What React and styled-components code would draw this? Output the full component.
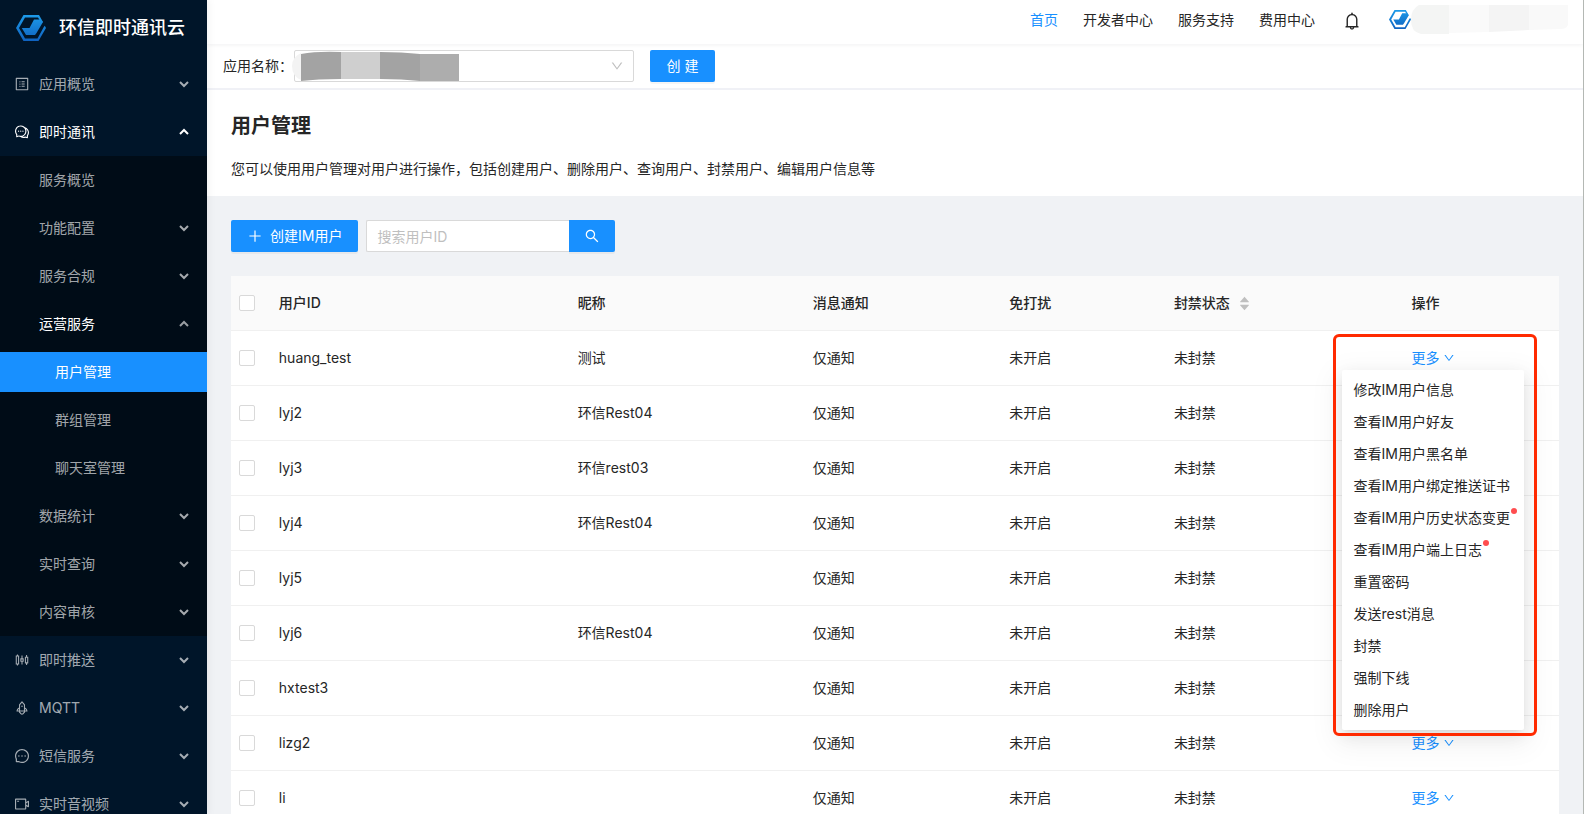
import { useState } from 'react'
import styled, { createGlobalStyle } from 'styled-components'
import {
  AiFillCaretDown,
  AiFillCaretUp,
  AiOutlineBell,
  AiOutlineComment,
  AiOutlineDown,
  AiOutlineMessage,
  AiOutlinePlus,
  AiOutlineProfile,
  AiOutlineRocket,
  AiOutlineSearch,
  AiOutlineSliders,
  AiOutlineVideoCamera,
} from 'react-icons/ai'

const GlobalStyle = createGlobalStyle`
  * {
    box-sizing: border-box;
  }
  body {
    margin: 0;
    font-family: Inter, "Noto Sans CJK SC", sans-serif;
    font-size: 14px;
    line-height: 22px;
    color: #262626;
    background: #f0f2f5;
  }
  button, input, select {
    font: inherit;
    color: inherit;
  }
  a {
    color: inherit;
    text-decoration: none;
  }
`

const Page = styled.div`
  display: flex;
  height: 100vh;
  overflow: hidden;
  border-right: 1px solid #b4b8b4;
`

const Sidebar = styled.aside`
  position: relative;
  z-index: 3;
  flex: 0 0 207px;
  overflow: hidden;
  background: #001529;
  color: rgba(255, 255, 255, 0.65);
  box-shadow: 2px 0 8px rgba(0, 0, 0, 0.05);
`

const Brand = styled.a`
  display: flex;
  align-items: center;
  gap: 13px;
  height: 56px;
  padding-left: 16px;
  color: #fff;
  font-size: 18px;
  font-weight: 500;
`

const MenuList = styled.ul`
  list-style: none;
  margin: 0;
  padding: ${props => (props.$sub ? 0 : '4px 0')};
  background: ${props => (props.$filled ? '#000c17' : 'transparent')};
`

const MenuItem = styled.li`
  display: flex;
  flex-direction: column;
`

const MenuButton = styled.button`
  display: flex;
  align-items: center;
  height: 40px;
  margin: 4px 0;
  padding: 0 18px 0 ${props => props.$indent}px;
  border: none;
  text-align: left;
  cursor: pointer;
  color: ${props => (props.$bright ? '#fff' : 'inherit')};
  background: ${props => (props.$active ? '#1890ff' : 'transparent')};
`

const MenuIcon = styled.span`
  display: flex;
  width: 25px;
  font-size: 16px;
`

const MenuLabel = styled.span`
  flex: 1;
`

const Arrow = styled.svg`
  width: 10px;
  height: 10px;
  fill: none;
  stroke: currentColor;
  stroke-width: 2;
  opacity: ${props => (props.$dim ? 0.6 : 1)};
  transform: ${props => (props.$up ? 'rotate(180deg)' : 'none')};
`

const Main = styled.div`
  flex: 1;
  min-width: 0;
`

const TopBar = styled.header`
  position: relative;
  z-index: 1;
  display: flex;
  align-items: center;
  justify-content: flex-end;
  height: 44px;
  padding: 0 15px 4px 0;
  background: #fff;
  box-shadow: 0 1px 4px rgba(0, 21, 41, 0.06);
`

const TopNav = styled.nav`
  display: flex;
  gap: 25px;
`

const TopLink = styled.a`
  color: ${props => (props.$active ? '#1890ff' : '#262626')};
`

const BellButton = styled.button`
  display: flex;
  margin: 2px 27px 0;
  padding: 0;
  border: none;
  background: none;
  font-size: 20px;
`

const Account = styled.a`
  display: flex;
  align-items: center;
`

const AppBar = styled.div`
  display: flex;
  align-items: center;
  height: 46px;
  padding: 0 16px;
  background: #fff;
  border-bottom: 2px solid #f0f1f6;
`

const AppLabel = styled.label`
  min-width: 71px;
`

const SelectBox = styled.div`
  position: relative;
  display: flex;
  align-items: center;
  width: 340px;
  margin-right: 16px;
`

const AppSelect = styled.select`
  width: 100%;
  height: 32px;
  padding: 0 32px 0 12px;
  appearance: none;
  border: 1px solid #d9d9d9;
  border-radius: 2px;
  background: #fff;
`

const SelectArrow = styled(AiOutlineDown)`
  position: absolute;
  right: 10px;
  font-size: 14px;
  color: #bfbfbf;
  pointer-events: none;
`

const Mask = styled.svg`
  position: absolute;
  left: -2px;
  top: 1px;
  pointer-events: none;
`

const PrimaryButton = styled.button`
  display: flex;
  align-items: center;
  justify-content: center;
  gap: 7px;
  min-width: ${props => (props.$attached ? '46px' : '65px')};
  height: 32px;
  padding: 0 ${props => (props.$attached ? 0 : '16px')};
  border: none;
  border-radius: ${props => (props.$attached ? '0 2px 2px 0' : '2px')};
  background: #1890ff;
  color: #fff;
  cursor: pointer;
  box-shadow: 0 2px 0 rgba(0, 0, 0, 0.04);
  svg {
    font-size: 16px;
  }
`

const PageHead = styled.section`
  padding: 20px 24px 16px;
  background: #fff;
`

const Title = styled.h1`
  margin: 0 0 16px;
  font-size: 20px;
  line-height: 32px;
  font-weight: 600;
`

const Description = styled.p`
  margin: 0;
`

const Content = styled.section`
  padding: 24px;
`

const Toolbar = styled.div`
  display: flex;
  gap: 8px;
  margin-bottom: 24px;
`

const SearchForm = styled.form`
  display: flex;
`

const SearchInput = styled.input`
  width: 203px;
  height: 32px;
  padding: 0 10px;
  border: 1px solid #d9d9d9;
  border-right: none;
  border-radius: 2px 0 0 2px;
  outline: none;
  &::placeholder {
    color: #bfbfbf;
  }
`

const Table = styled.table`
  width: 100%;
  table-layout: fixed;
  border-collapse: separate;
  border-spacing: 0;
  background: #fff;
`

const Cell = styled.td`
  height: 55px;
  padding: 0 8px;
  border-bottom: 1px solid #f0f0f0;
`

const HeadCell = styled.th`
  width: ${props => props.$width};
  height: 55px;
  padding: 0 8px;
  border-bottom: 1px solid #f0f0f0;
  background: #fafafa;
  text-align: left;
  font-weight: 500;
`

const SortButton = styled.button`
  display: inline-flex;
  align-items: center;
  gap: 8px;
  padding: 0;
  border: none;
  background: none;
`

const Carets = styled.span`
  display: flex;
  flex-direction: column;
  font-size: 13px;
  color: #bfbfbf;
  svg + svg {
    margin-top: -5px;
  }
`

const Checkbox = styled.input`
  display: block;
  width: 16px;
  height: 16px;
  margin: 0;
  appearance: none;
  border: 1px solid #d9d9d9;
  border-radius: 2px;
  background: #fff;
  &:checked {
    background: #1890ff;
    border-color: #1890ff;
  }
`

const MoreWrap = styled.div`
  position: relative;
  display: inline-block;
`

const MoreButton = styled.button`
  display: flex;
  align-items: center;
  gap: 3px;
  padding: 0;
  border: none;
  background: none;
  color: #1890ff;
  cursor: pointer;
  svg {
    font-size: 12px;
  }
`

const Dropdown = styled.ul`
  position: absolute;
  z-index: 2;
  top: 23px;
  left: -70px;
  min-width: 182px;
  margin: 0;
  padding: 4px 0;
  list-style: none;
  border-radius: 2px;
  background: #fff;
  box-shadow: 0 3px 6px -4px rgba(0, 0, 0, 0.12), 0 6px 16px rgba(0, 0, 0, 0.08), 0 9px 28px 8px rgba(0, 0, 0, 0.05);
`

const DropdownItem = styled.button`
  display: block;
  width: 100%;
  padding: 5px 12px;
  border: none;
  background: none;
  text-align: left;
  white-space: nowrap;
  cursor: pointer;
`

const ItemText = styled.span`
  position: relative;
`

const Dot = styled.i`
  position: absolute;
  top: -1px;
  right: -7px;
  width: 6px;
  height: 6px;
  border-radius: 50%;
  background: #ff4d4f;
`

const Highlight = styled.div`
  position: absolute;
  z-index: 3;
  top: -13px;
  left: -79px;
  width: 204px;
  height: 402px;
  border: 3px solid #ff2a00;
  border-radius: 6px;
  pointer-events: none;
`

const menu = [
  { label: '应用概览', icon: AiOutlineProfile },
  {
    label: '即时通讯',
    icon: AiOutlineComment,
    children: [
      { label: '服务概览', leaf: true },
      { label: '功能配置' },
      { label: '服务合规' },
      { label: '运营服务', children: ['用户管理', '群组管理', '聊天室管理'] },
      { label: '数据统计' },
      { label: '实时查询' },
      { label: '内容审核' },
    ],
  },
  { label: '即时推送', icon: AiOutlineSliders },
  { label: 'MQTT', icon: AiOutlineRocket },
  { label: '短信服务', icon: AiOutlineMessage },
  { label: '实时音视频', icon: AiOutlineVideoCamera },
]

const users = [
  { id: 'huang_test', nick: '测试' },
  { id: 'lyj2', nick: '环信Rest04' },
  { id: 'lyj3', nick: '环信rest03' },
  { id: 'lyj4', nick: '环信Rest04' },
  { id: 'lyj5', nick: '' },
  { id: 'lyj6', nick: '环信Rest04' },
  { id: 'hxtest3', nick: '' },
  { id: 'lizg2', nick: '' },
  { id: 'li', nick: '' },
]

const actions = [
  { text: '修改IM用户信息' },
  { text: '查看IM用户好友' },
  { text: '查看IM用户黑名单' },
  { text: '查看IM用户绑定推送证书' },
  { text: '查看IM用户历史状态变更', dot: true },
  { text: '查看IM用户端上日志', dot: true },
  { text: '重置密码' },
  { text: '发送rest消息' },
  { text: '封禁' },
  { text: '强制下线' },
  { text: '删除用户' },
]

const Logo = ({ width, id }) => (
  <svg width={width} viewBox="0 0 30 26" aria-hidden="true">
    <defs>
      <linearGradient id={id} gradientUnits="userSpaceOnUse" x1="0" y1="0" x2="0" y2="26">
        <stop offset="0" stopColor="#1d9be9" />
        <stop offset="1" stopColor="#0f62c0" />
      </linearGradient>
    </defs>
    <path
      fill={`url(#${id})`}
      d="M7.5 0H23L27 7L25.5 8L22 2.5H9L3 13L9 23.5H21.5L27.8 12L28.8 10.8L30 13L22.5 26H7.5L0 13Z"
    />
    <path fill={`url(#${id})`} d="M18 4.5H24.5L27 7L20.5 18L19 20H10L5.8 13H13.5Z" />
  </svg>
)

const MenuArrow = ({ up, dim }) => (
  <Arrow $up={up} $dim={dim} viewBox="0 0 10 10" aria-hidden="true">
    <path d="M1 3L5 7L9 3" />
  </Arrow>
)

const SideMenu = () => {
  const [current, setCurrent] = useState('用户管理')

  return (
    <MenuList>
      {menu.map(({ label, icon: Icon, children }) => (
        <MenuItem key={label}>
          <MenuButton $indent={14} $bright={!!children}>
            <MenuIcon><Icon /></MenuIcon>
            <MenuLabel>{label}</MenuLabel>
            <MenuArrow up={!!children} />
          </MenuButton>
          {children && (
            <MenuList $sub $filled>
              {children.map(item => (
                <MenuItem key={item.label}>
                  <MenuButton $indent={39} $bright={!!item.children}>
                    <MenuLabel>{item.label}</MenuLabel>
                    {!item.leaf && <MenuArrow up={!!item.children} dim={!!item.children} />}
                  </MenuButton>
                  {item.children && (
                    <MenuList $sub>
                      {item.children.map(name => (
                        <MenuItem key={name}>
                          <MenuButton
                            $indent={55}
                            $active={name === current}
                            $bright={name === current}
                            onClick={() => setCurrent(name)}
                          >
                            {name}
                          </MenuButton>
                        </MenuItem>
                      ))}
                    </MenuList>
                  )}
                </MenuItem>
              ))}
            </MenuList>
          )}
        </MenuItem>
      ))}
    </MenuList>
  )
}

const MoreActions = ({ open, onToggle }) => (
  <MoreWrap>
    <MoreButton type="button" aria-expanded={open} onClick={onToggle}>
      更多<AiOutlineDown />
    </MoreButton>
    {open && (
      <>
        <Dropdown>
          {actions.map(({ text, dot }) => (
            <li key={text}>
              <DropdownItem type="button">
                <ItemText>{text}{dot && <Dot />}</ItemText>
              </DropdownItem>
            </li>
          ))}
        </Dropdown>
        <Highlight />
      </>
    )}
  </MoreWrap>
)

const UserTable = () => {
  const [openId, setOpenId] = useState('huang_test')

  return (
    <Table>
      <thead>
        <tr>
          <HeadCell $width="3%"><Checkbox type="checkbox" aria-label="全选" /></HeadCell>
          <HeadCell $width="22.5%">用户ID</HeadCell>
          <HeadCell $width="17.7%">昵称</HeadCell>
          <HeadCell $width="14.8%">消息通知</HeadCell>
          <HeadCell $width="12.4%">免打扰</HeadCell>
          <HeadCell $width="17.9%">
            <SortButton type="button">
              封禁状态
              <Carets><AiFillCaretUp /><AiFillCaretDown /></Carets>
            </SortButton>
          </HeadCell>
          <HeadCell $width="11.7%">操作</HeadCell>
        </tr>
      </thead>
      <tbody>
        {users.map(({ id, nick }) => (
          <tr key={id}>
            <Cell><Checkbox type="checkbox" aria-label={id} /></Cell>
            <Cell>{id}</Cell>
            <Cell>{nick}</Cell>
            <Cell>仅通知</Cell>
            <Cell>未开启</Cell>
            <Cell>未封禁</Cell>
            <Cell>
              <MoreActions open={openId === id} onToggle={() => setOpenId(openId === id ? null : id)} />
            </Cell>
          </tr>
        ))}
      </tbody>
    </Table>
  )
}

export default function App() {
  return (
    <>
      <GlobalStyle />
      <Page>
        <Sidebar>
          <Brand href="#"><Logo width={30} id="brand" />环信即时通讯云</Brand>
          <SideMenu />
        </Sidebar>
        <Main>
          <TopBar>
            <TopNav>
              <TopLink href="#" $active>首页</TopLink>
              <TopLink href="#">开发者中心</TopLink>
              <TopLink href="#">服务支持</TopLink>
              <TopLink href="#">费用中心</TopLink>
            </TopNav>
            <BellButton type="button" aria-label="通知"><AiOutlineBell /></BellButton>
            <Account href="#" aria-label="账户">
              <Logo width={22} id="account" />
              <svg width="157" height="30" viewBox="0 0 157 30" aria-hidden="true">
                <path fill="#f4f5f4" d="M8 0H38V29H10Q0 27 0 15Q0 4 8 0Z" />
                <path fill="#fafafa" d="M38 0H78V27L38 28Z" />
                <path fill="#f4f4f4" d="M78 0H118V25L78 27Z" />
                <path fill="#f9f9f9" d="M118 0H157V20Q155 24 150 24L118 25Z" />
              </svg>
            </Account>
          </TopBar>
          <AppBar>
            <AppLabel htmlFor="app">应用名称：</AppLabel>
            <SelectBox>
              <AppSelect id="app" />
              <Mask width="168" height="30" viewBox="0 0 168 30" aria-hidden="true">
                <path fill="#f3f3f3" d="M9 2V29Q0 25 0 15Q0 6 9 2Z" />
                <path fill="#a3a3a3" d="M9 3Q25 0 49 1V28Q25 28 9 30Z" />
                <path fill="#cfcfcf" d="M49 1H88V28H49Z" />
                <path fill="#a3a3a3" d="M88 1Q110 1 128 3V30Q110 28 88 28Z" />
                <path fill="#adadad" d="M128 3H167V30H128Z" />
              </Mask>
              <SelectArrow />
            </SelectBox>
            <PrimaryButton type="button">创 建</PrimaryButton>
          </AppBar>
          <PageHead>
            <Title>用户管理</Title>
            <Description>
              您可以使用用户管理对用户进行操作，包括创建用户、删除用户、查询用户、封禁用户、编辑用户信息等
            </Description>
          </PageHead>
          <Content>
            <Toolbar>
              <PrimaryButton type="button"><AiOutlinePlus />创建IM用户</PrimaryButton>
              <SearchForm onSubmit={e => e.preventDefault()}>
                <SearchInput placeholder="搜索用户ID" aria-label="搜索用户ID" />
                <PrimaryButton $attached aria-label="搜索"><AiOutlineSearch /></PrimaryButton>
              </SearchForm>
            </Toolbar>
            <UserTable />
          </Content>
        </Main>
      </Page>
    </>
  )
}
